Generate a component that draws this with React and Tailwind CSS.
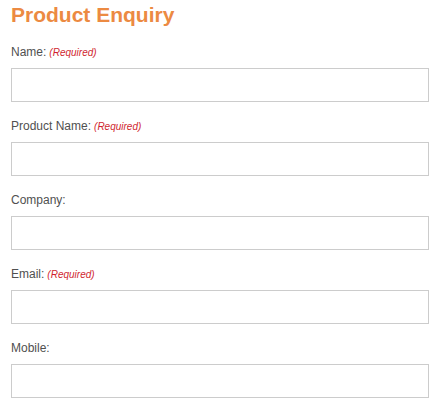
export default function App() {
  const fields = [
    { label: "Name:", req: true },
    { label: "Product Name:", req: true },
    { label: "Company:", req: false },
    { label: "Email:", req: true },
    { label: "Mobile:", req: false },
  ];
  return (
    <div className="bg-white w-[442px] h-[413px] overflow-hidden pl-[11px] pr-[13px]" style={{ fontFamily: '"Liberation Sans", Arial, sans-serif' }}>
      <h1 className="text-[21px] leading-[26px] font-bold text-[#ec8a42] pt-[2px] m-0" style={{ fontFamily: '"Liberation Sans", Arial, sans-serif' }}>Product Enquiry</h1>
      <div className="flex flex-col pt-[17px]">
        {fields.map((f) => (
          <div key={f.label} className="flex flex-col mb-[17px]">
            <div className="h-[15px] leading-[15px] text-[12px] text-[#505050] mb-[8px] flex items-baseline">
              <span>{f.label}</span>
              {f.req && <span className="ml-[3px] text-[10px] italic text-[#d01f2f]">(Required)</span>}
            </div>
            <input className="h-[34px] w-full border border-[#cccccc] bg-white outline-none" />
          </div>
        ))}
      </div>
    </div>
  );
}
